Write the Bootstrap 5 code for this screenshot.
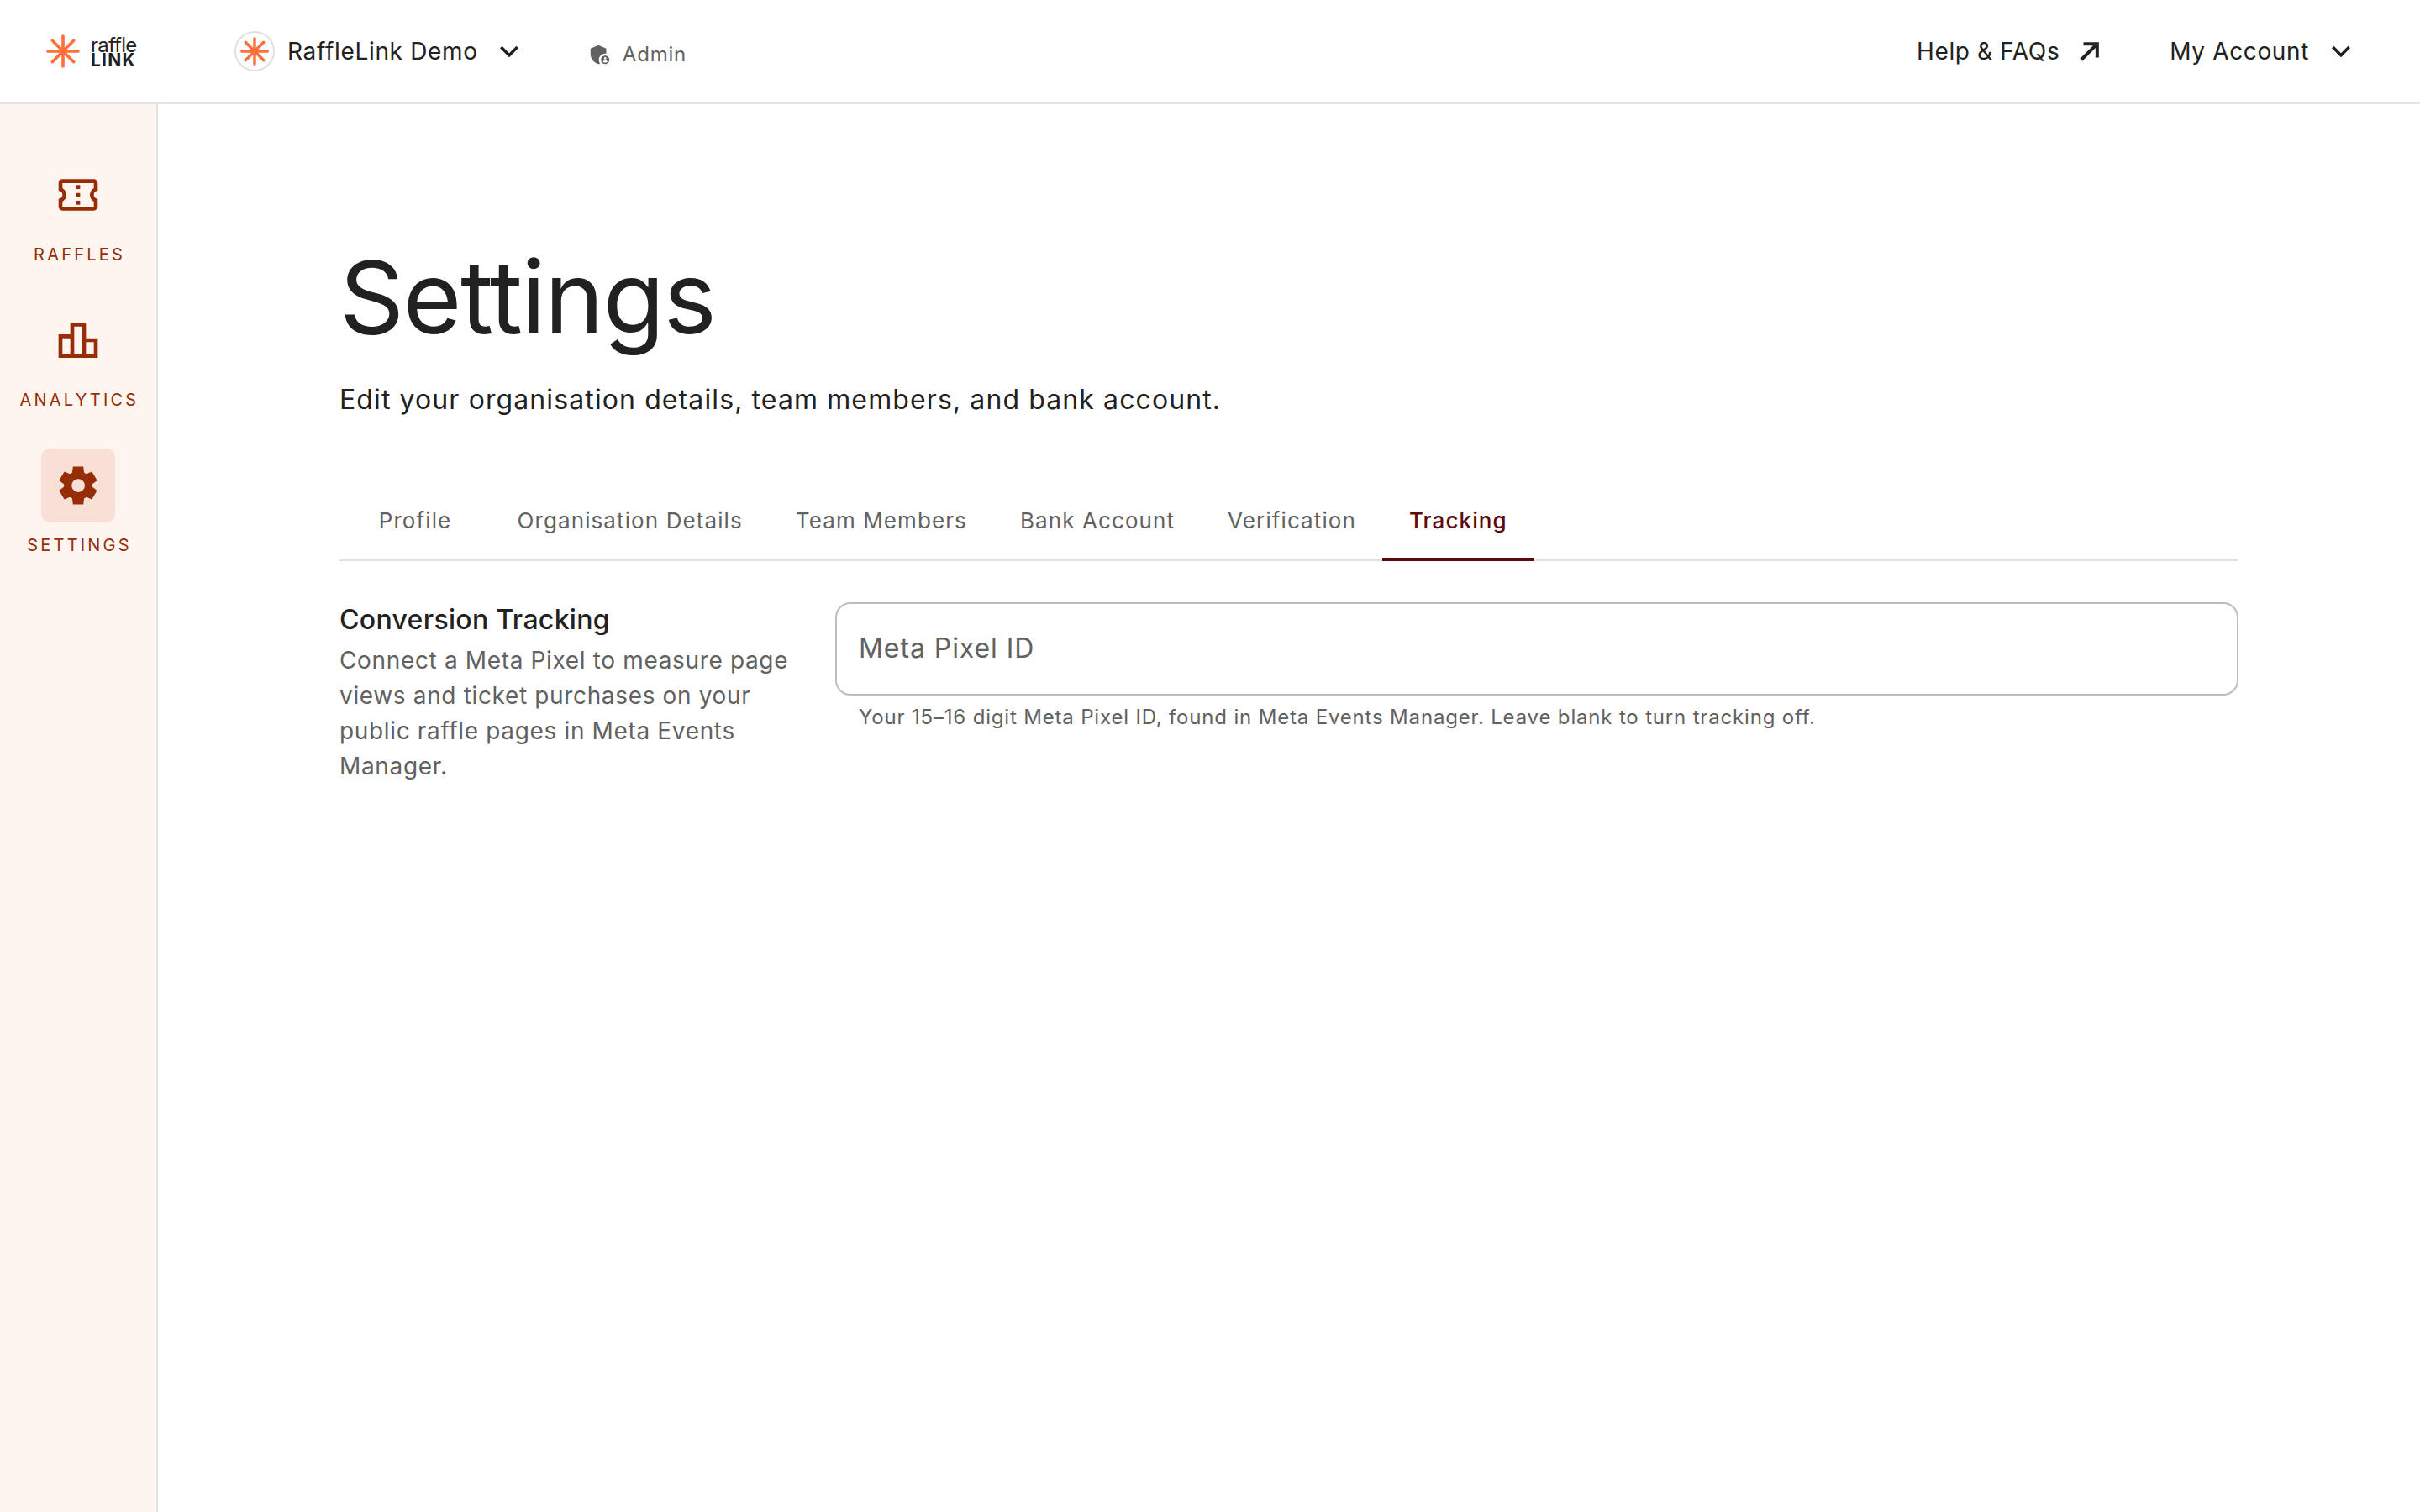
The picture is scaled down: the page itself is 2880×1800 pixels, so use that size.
<!DOCTYPE html>
<html lang="en">
<head>
<meta charset="utf-8">
<title>Settings</title>
<link href="https://cdn.jsdelivr.net/npm/bootstrap@5.3.0/dist/css/bootstrap.min.css" rel="stylesheet">
<style>
html,body{height:100%}
body{font-family:Inter,"Liberation Sans",sans-serif;color:#212121;background:#fff;min-height:1800px;letter-spacing:.02em}
.topbar{height:124px;border-bottom:2px solid #e4e4e4;padding:0 72px 0 55px}
.logo-mark{width:40px;height:40px;flex:none}
.logo-type{margin-left:13px;padding-top:3px;line-height:1;color:#212121;width:115px;flex:none}
.logo-a{font-size:24px;letter-spacing:-.8px;line-height:18px}
.logo-b{font-size:21px;font-weight:700;letter-spacing:1.2px;line-height:18px}
.org-avatar{width:48px;height:48px;border:2px solid #e0e0e0;border-radius:50%;flex:none;margin-left:56px}
.org-name{font-size:28px;margin-left:15px;letter-spacing:.68px}
.chev-org{margin-left:15px}
.admin-tag{font-size:24px;color:#616161;margin-left:71px;padding-top:8px;letter-spacing:.8px;gap:12px}
.top-link{font-size:28px;color:#212121;text-decoration:none;letter-spacing:.63px}
.top-ico{margin-left:16px}
.acct-link{margin-left:75px}
.ico{fill:currentColor;flex:none}
.side{width:188px;flex:none;background:#fff5f0;border-right:2px solid #e4e4e4;padding-top:64px;color:#962d07}
.side-item{height:88px;width:88px}
.side-on{background:#f9e0d6;border-radius:10px}
.side-label{font-size:20px;letter-spacing:.16em;line-height:24px;margin-top:15px;margin-bottom:46px;margin-right:-3px}
.page-wrap{padding:158px 216px 0 216px;min-width:0}
.page-title{font-size:120px;font-weight:400;line-height:1.2;margin:0;letter-spacing:-1.5px}
.page-sub{font-size:32px;margin:26px 0 0;line-height:48px;letter-spacing:1.107px}
.tabline{margin-top:78px;border-bottom:2px solid #e0e0e0;height:90px}
.tabline .nav-link{font-size:26px;color:#616161;padding:0 31.5px;height:90px;line-height:83px;border:0;border-radius:0;background:none;letter-spacing:1.1px}
.tabline .nav-link.first-tab{width:180px;text-align:center;padding:0}
.tabline .nav-link.active{color:#5c0a0a;font-weight:500;border-bottom:4px solid #5c0a0a;background:none}
.form-block{margin-top:49px}
.form-side{width:590px;flex:none}
.form-h{font-size:32px;font-weight:500;line-height:24px;margin:0 0 15px;padding-top:9px;color:#212121}
.form-p{font-size:28px;line-height:42px;color:#616161;margin:0;letter-spacing:.65px}
.field{height:111px;border:2px solid #bdbdbd;border-radius:18px;font-size:32px;padding:0 26px 3px;letter-spacing:.93px;box-shadow:none;color:#212121}
.field::placeholder{color:#616161;opacity:1}
.field-help{font-size:24px;color:#616161;padding:10px 28px 0;line-height:32px;letter-spacing:.825px}
</style>
</head>
<body>
<header class="topbar d-flex align-items-center">
  <svg class="logo-mark" viewBox="0 0 40 40"><g stroke="#ff6f3c" stroke-width="3.6" stroke-linecap="round"><path d="M20 2v36M2 20h36M7.3 7.3l25.4 25.4M32.7 7.3 7.3 32.7"/></g></svg>
  <div class="logo-type"><div class="logo-a">raffle</div><div class="logo-b">LINK</div></div>
  <div class="org-avatar d-flex align-items-center justify-content-center">
    <svg width="34" height="34" viewBox="0 0 40 40"><g stroke="#ff6f3c" stroke-width="4" stroke-linecap="round"><path d="M20 2v36M2 20h36M7.3 7.3l25.4 25.4M32.7 7.3 7.3 32.7"/></g></svg>
  </div>
  <div class="org-name">RaffleLink Demo</div>
  <svg class="ico chev-org" width="44" height="44" viewBox="0 0 24 24"><path d="M16.59 8.59L12 13.17 7.41 8.59 6 10l6 6 6-6z"/></svg>
  <div class="admin-tag d-flex align-items-center">
    <svg class="ico" width="30" height="30" viewBox="0 0 24 24"><path d="M17 11c.34 0 .67.04 1 .09V6.27L10.5 3 3 6.27v4.91c0 4.54 3.2 8.79 7.5 9.82.55-.13 1.08-.32 1.6-.55-.69-.98-1.1-2.17-1.1-3.45 0-3.31 2.69-6 6-6z"/><path d="M17 13c-2.21 0-4 1.79-4 4s1.79 4 4 4 4-1.79 4-4-1.79-4-4-4zm0 1.38c.62 0 1.12.51 1.12 1.12s-.51 1.12-1.12 1.12-1.12-.51-1.12-1.12.5-1.12 1.12-1.12zm0 5.37c-.93 0-1.74-.46-2.24-1.17.05-.72 1.51-1.08 2.24-1.08s2.19.36 2.24 1.08c-.5.71-1.31 1.17-2.24 1.17z"/></svg>
    <span>Admin</span>
  </div>
  <a class="top-link ms-auto d-flex align-items-center" href="#">Help &amp; FAQs
    <svg class="ico top-ico" width="40" height="40" viewBox="0 0 24 24"><path d="M7.5 5.5h11v11h-2.4V9.6L6.7 19 5 17.3l9.4-9.4H7.5z"/></svg></a>
  <a class="top-link acct-link d-flex align-items-center" href="#">My Account
    <svg class="ico top-ico" width="44" height="44" viewBox="0 0 24 24"><path d="M16.59 8.59L12 13.17 7.41 8.59 6 10l6 6 6-6z"/></svg></a>
</header>
<div class="d-flex" style="min-height:1676px">
  <aside class="side d-flex flex-column align-items-center">
    <div class="side-item d-flex align-items-center justify-content-center"><svg class="ico" width="56" height="56" viewBox="0 0 24 24"><path d="M22 10V6c0-1.11-.9-2-2-2H4c-1.1 0-1.99.89-1.99 2v4c1.1 0 1.99.9 1.99 2s-.89 2-2 2v4c0 1.1.9 2 2 2h16c1.1 0 2-.9 2-2v-4c-1.1 0-2-.9-2-2s.9-2 2-2zm-2-1.46c-1.19.69-2 1.99-2 3.46s.81 2.77 2 3.46V18H4v-2.54c1.19-.69 2-1.99 2-3.46 0-1.48-.8-2.77-1.99-3.46L4 6h16v2.54zM11 15h2v2h-2zm0-4h2v2h-2zm0-4h2v2h-2z"/></svg></div>
    <div class="side-label">RAFFLES</div>
    <div class="side-item d-flex align-items-center justify-content-center"><svg class="ico" width="56" height="56" viewBox="0 0 24 24"><path d="M16 11V3H8v6H2v12h20V11h-6zm-6-6h4v14h-4V5zm-6 6h4v8H4v-8zm16 8h-4v-6h4v6z"/></svg></div>
    <div class="side-label">ANALYTICS</div>
    <div class="side-item side-on d-flex align-items-center justify-content-center"><svg class="ico" width="54" height="54" viewBox="0 -960 960 960"><path d="m370-80-16-128q-13-5-24.5-12T307-235l-119 50L78-375l103-78q-1-7-1-13.5v-27q0-6.5 1-13.5L78-585l110-190 119 50q11-8 23-15t24-12l16-128h220l16 128q13 5 24.5 12t22.5 15l119-50 110 190-103 78q1 7 1 13.5v27q0 6.5-2 13.5l103 78-110 190-118-50q-11 8-23 15t-24 12L590-80H370Zm112-260q58 0 99-41t41-99q0-58-41-99t-99-41q-59 0-99.5 41T342-480q0 58 40.5 99t99.5 41Z"/></svg></div>
    <div class="side-label">SETTINGS</div>
  </aside>
  <main class="page-wrap flex-grow-1">
    <h1 class="page-title">Settings</h1>
    <p class="page-sub">Edit your organisation details, team members, and bank account.</p>
    <ul class="nav tabline">
      <li class="nav-item"><a class="nav-link first-tab" href="#">Profile</a></li>
      <li class="nav-item"><a class="nav-link" href="#">Organisation Details</a></li>
      <li class="nav-item"><a class="nav-link" href="#">Team Members</a></li>
      <li class="nav-item"><a class="nav-link" href="#">Bank Account</a></li>
      <li class="nav-item"><a class="nav-link" href="#">Verification</a></li>
      <li class="nav-item"><a class="nav-link active" href="#">Tracking</a></li>
    </ul>
    <section class="form-block d-flex">
      <div class="form-side">
        <h2 class="form-h">Conversion Tracking</h2>
        <p class="form-p">Connect a Meta Pixel to measure page<br>views and ticket purchases on your<br>public raffle pages in Meta Events<br>Manager.</p>
      </div>
      <div class="flex-grow-1">
        <input class="form-control field" type="text" placeholder="Meta Pixel ID">
        <div class="field-help">Your 15–16 digit Meta Pixel ID, found in Meta Events Manager. Leave blank to turn tracking off.</div>
      </div>
    </section>
  </main>
</div>
<script src="https://cdn.jsdelivr.net/npm/bootstrap@5.3.0/dist/js/bootstrap.bundle.min.js"></script>
</body>
</html>
